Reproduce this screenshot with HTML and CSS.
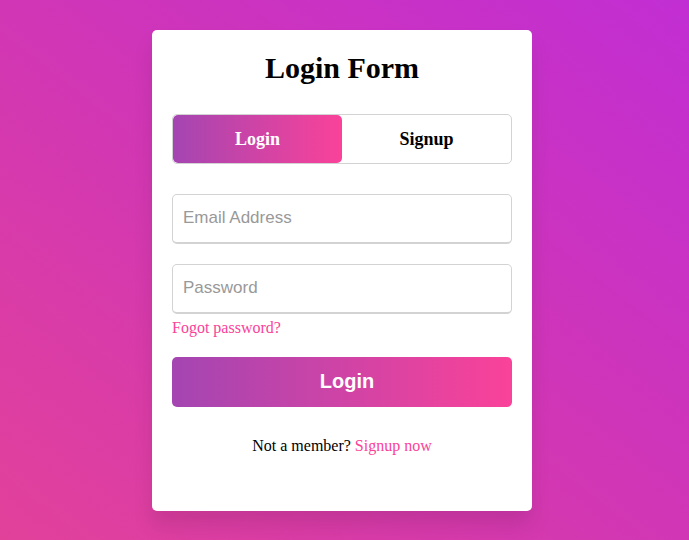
FILE: index.html
```html
<!DOCTYPE html>
<html>
<head>
<meta charset="utf-8">
<link rel="stylesheet" href="styles.css">
</head>
<body>
<div class="wrapper">
  <div class="title">Login Form</div>
  <div class="slide-controls">
    <div class="slide active">Login</div>
    <div class="slide">Signup</div>
  </div>
  <form class="form">
    <div class="field"><input type="text" placeholder="Email Address"></div>
    <div class="field"><input type="password" placeholder="Password"></div>
    <div class="pass-link"><a href="#">Fogot password?</a></div>
    <div class="btn">Login</div>
    <div class="signup-link">Not a member? <a href="#">Signup now</a></div>
  </form>
</div>
</body>
</html>
```
FILE: styles.css
```css
* { box-sizing: border-box; }
html, body { margin: 0; height: 100%; }
body {
  font-family: "Liberation Serif", "Times New Roman", serif;
  display: flex;
  align-items: center;
  justify-content: center;
  padding-right: 5px;
  background: linear-gradient(to top right, #e2419a, #d136b5 50%, #c12ed3);
}
.wrapper {
  width: 380px;
  background: #fff;
  padding: 20px 20px 56px;
  border-radius: 5px;
  box-shadow: 0 15px 20px rgba(0,0,0,0.1);
}
.title {
  font-size: 30px;
  font-weight: bold;
  text-align: center;
  line-height: 36px;
}
.slide-controls {
  display: flex;
  height: 50px;
  margin-top: 28px;
  border: 1px solid lightgrey;
  border-radius: 5px;
  overflow: hidden;
}
.slide {
  flex: 1;
  display: flex;
  align-items: center;
  justify-content: center;
  padding-top: 2px;
  font-size: 18px;
  font-weight: bold;
  color: #000;
}
.slide.active {
  color: #fff;
  background: linear-gradient(to right, #a445b2, #fa4299);
  border-radius: 5px;
}
.form { margin-top: 30px; }
.field { height: 50px; margin-top: 20px; }
.field:first-child { margin-top: 0; }
.field input {
  width: 100%;
  height: 100%;
  border: 1px solid lightgrey;
  border-bottom-width: 2px;
  border-radius: 5px;
  padding-left: 10px;
  font-family: "Liberation Sans", Arial, sans-serif;
  font-size: 17px;
  outline: none;
}
.field input::placeholder { color: #999; }
.pass-link { margin-top: 5px; font-size: 16px; line-height: 18px; }
a { color: #fa4299; text-decoration: none; }
.btn {
  margin-top: 20px;
  height: 50px;
  border-radius: 5px;
  background: linear-gradient(to right, #a445b2, #fa4299);
  color: #fff;
  font-family: "Liberation Sans", Arial, sans-serif;
  font-size: 20px;
  font-weight: bold;
  display: flex;
  align-items: center;
  justify-content: center;
  padding-left: 10px;
}
.signup-link {
  margin-top: 30px;
  text-align: center;
  font-size: 16px;
  line-height: 18px;
}
```
